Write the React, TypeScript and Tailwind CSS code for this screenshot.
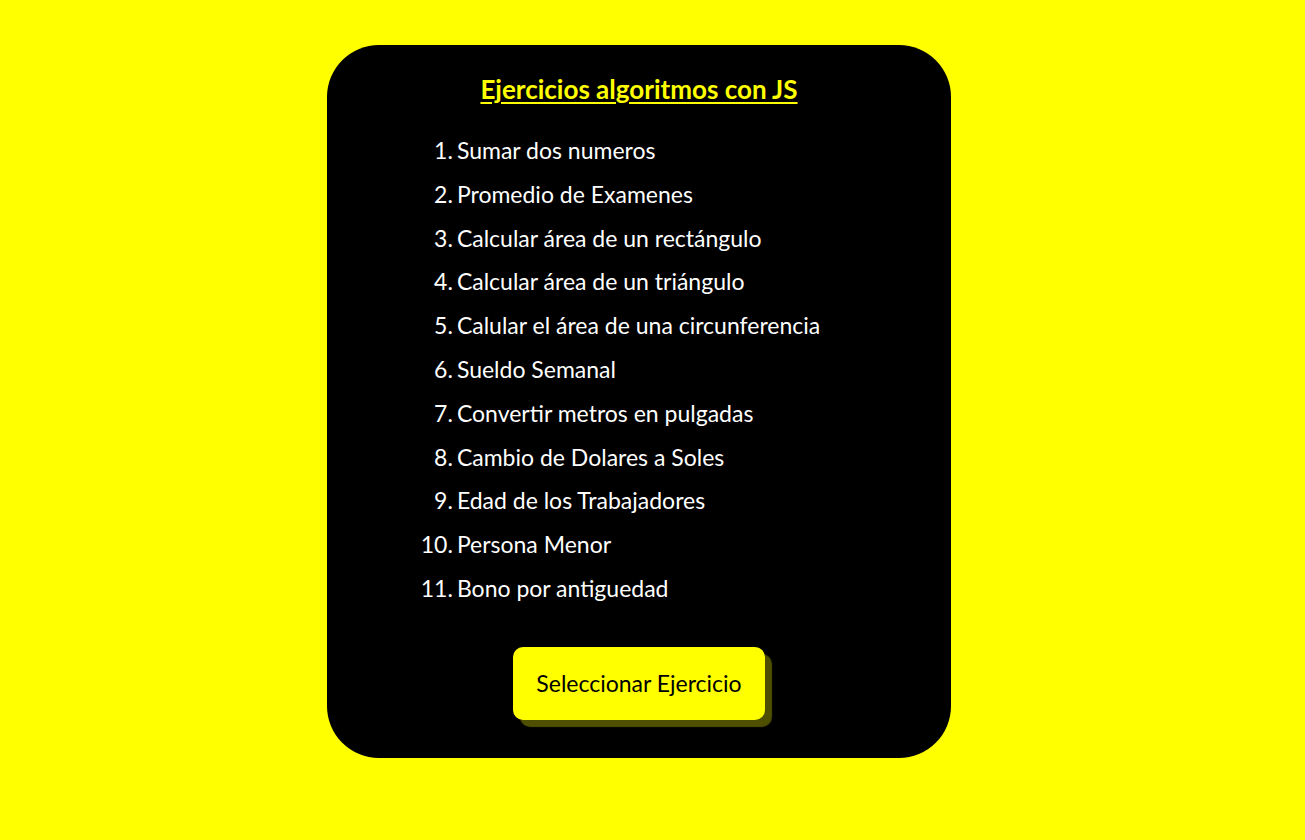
import React from "react";

const items = [
  "Sumar dos numeros",
  "Promedio de Examenes",
  "Calcular área de un rectángulo",
  "Calcular área de un triángulo",
  "Calular el área de una circunferencia",
  "Sueldo Semanal",
  "Convertir metros en pulgadas",
  "Cambio de Dolares a Soles",
  "Edad de los Trabajadores",
  "Persona Menor",
  "Bono por antiguedad",
];

export default function App() {
  return (
    <div
      className="min-h-[840px] w-full bg-[#ffff00] flex flex-col items-center pt-[45px] pr-[27px]"
      style={{ fontFamily: "Lato, 'Open Sans', sans-serif" }}
    >
      <div className="w-[624px] h-[713px] bg-black rounded-[52px] flex flex-col items-center pt-[29px]">
        <h1 className="text-[26px] leading-[30px] font-bold text-[#ffff00] underline underline-offset-[3px] decoration-2">
          Ejercicios algoritmos con JS
        </h1>
        <ol className="mt-[25px] mr-[37px] text-white text-[23px] grid grid-cols-[auto_auto] gap-x-[4px]">
          {items.map((t, i) => (
            <li key={t} className="contents">
              <span className="leading-[43.8px] text-right">{i + 1}.</span>
              <span className="leading-[43.8px]">{t}</span>
            </li>
          ))}
        </ol>
        <button className="mt-[36px] w-[252px] h-[73px] rounded-[10px] bg-[#ffff00] text-black text-[23px] shadow-[7px_7px_1px_#4f4f00]">
          Seleccionar Ejercicio
        </button>
      </div>
    </div>
  );
}
